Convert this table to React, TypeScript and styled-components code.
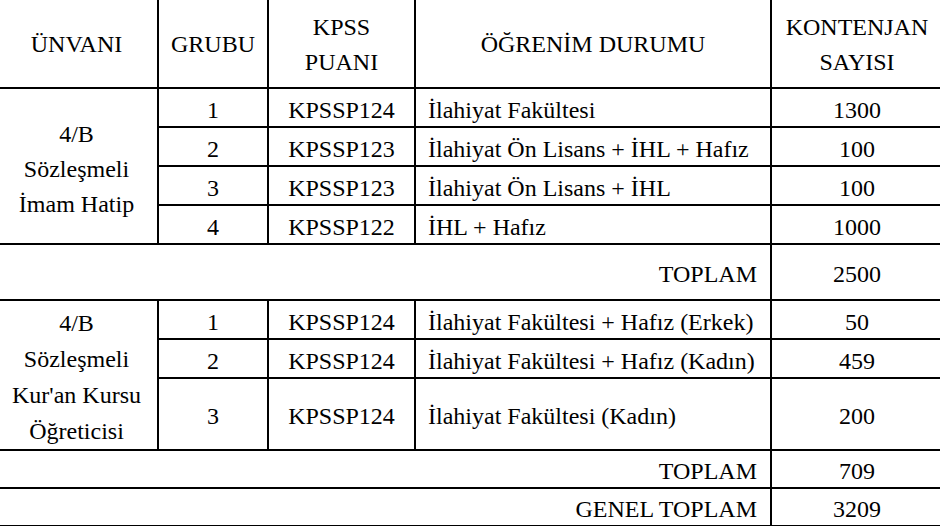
import styled, { createGlobalStyle } from 'styled-components'

const GlobalStyle = createGlobalStyle`
  html, body {
    margin: 0;
    padding: 0;
    background: #fff;
    overflow: hidden;
  }
`

type Row = { grup: string; puan: string; ogrenim: string; sayi: string }

const imamRows: Row[] = [
  { grup: '1', puan: 'KPSSP124', ogrenim: 'İlahiyat Fakültesi', sayi: '1300' },
  { grup: '2', puan: 'KPSSP123', ogrenim: 'İlahiyat Ön Lisans + İHL + Hafız', sayi: '100' },
  { grup: '3', puan: 'KPSSP123', ogrenim: 'İlahiyat Ön Lisans + İHL', sayi: '100' },
  { grup: '4', puan: 'KPSSP122', ogrenim: 'İHL + Hafız', sayi: '1000' },
]

const kuranRows: Row[] = [
  { grup: '1', puan: 'KPSSP124', ogrenim: 'İlahiyat Fakültesi + Hafız (Erkek)', sayi: '50' },
  { grup: '2', puan: 'KPSSP124', ogrenim: 'İlahiyat Fakültesi + Hafız (Kadın)', sayi: '459' },
  { grup: '3', puan: 'KPSSP124', ogrenim: 'İlahiyat Fakültesi (Kadın)', sayi: '200' },
]

export default function App() {
  return (
    <>
      <GlobalStyle />
      <Table>
        <HeadCell>ÜNVANI</HeadCell>
        <HeadCell>GRUBU</HeadCell>
        <HeadCell $lines>KPSS<br />PUANI</HeadCell>
        <HeadCell>ÖĞRENİM DURUMU</HeadCell>
        <HeadCell $lines>KONTENJAN<br />SAYISI</HeadCell>

        <TitleCell $rows={imamRows.length} $lh={35} $top={6}>
          4/B<br />Sözleşmeli<br />İmam Hatip
        </TitleCell>
        {imamRows.map(r => (
          <DataRow key={'i' + r.grup} row={r} />
        ))}
        <TotalLabel>TOPLAM</TotalLabel>
        <Cell>2500</Cell>

        <TitleCell $rows={kuranRows.length} $lh={36} $top={4}>
          4/B<br />Sözleşmeli<br />Kur'an Kursu<br />Öğreticisi
        </TitleCell>
        {kuranRows.map(r => (
          <DataRow key={'k' + r.grup} row={r} />
        ))}
        <TotalLabel>TOPLAM</TotalLabel>
        <Cell>709</Cell>

        <TotalLabel>GENEL TOPLAM</TotalLabel>
        <Cell>3209</Cell>
      </Table>
    </>
  )
}

function DataRow({ row }: { row: Row }) {
  return (
    <>
      <Cell>{row.grup}</Cell>
      <Cell>{row.puan}</Cell>
      <TextCell>{row.ogrenim}</TextCell>
      <Cell>{row.sayi}</Cell>
    </>
  )
}

// black background + 2px gaps draw the rule lines
const Table = styled.div`
  display: grid;
  grid-template-columns: 161px 108px 145px 354px 170px;
  grid-template-rows: 87px 37px 37px 37px 37px 54px 37px 37px 70px 36px 36px;
  gap: 2px;
  padding: 2px;
  margin: -2px 0 0 -6px;
  width: max-content;
  background: #000;
  color: #000;
  font-family: "Liberation Serif", "Times New Roman", serif;
  font-size: 24px;
`

const Cell = styled.div`
  background: #fff;
  display: flex;
  align-items: center;
  justify-content: center;
  text-align: center;
  line-height: 28px;
  padding-top: 4px;
`

const HeadCell = styled(Cell)<{ $lines?: boolean }>`
  line-height: ${p => (p.$lines ? '35px' : '28px')};
  padding-top: ${p => (p.$lines ? '2px' : '0')};
`

const TitleCell = styled(Cell)<{ $rows: number; $lh: number; $top: number }>`
  grid-row: span ${p => p.$rows};
  line-height: ${p => p.$lh}px;
  padding-top: ${p => p.$top}px;
`

const TextCell = styled(Cell)`
  justify-content: flex-start;
  text-align: left;
  padding-left: 12px;
`

const TotalLabel = styled(Cell)`
  grid-column: span 4;
  justify-content: flex-end;
  padding-right: 13px;
`
